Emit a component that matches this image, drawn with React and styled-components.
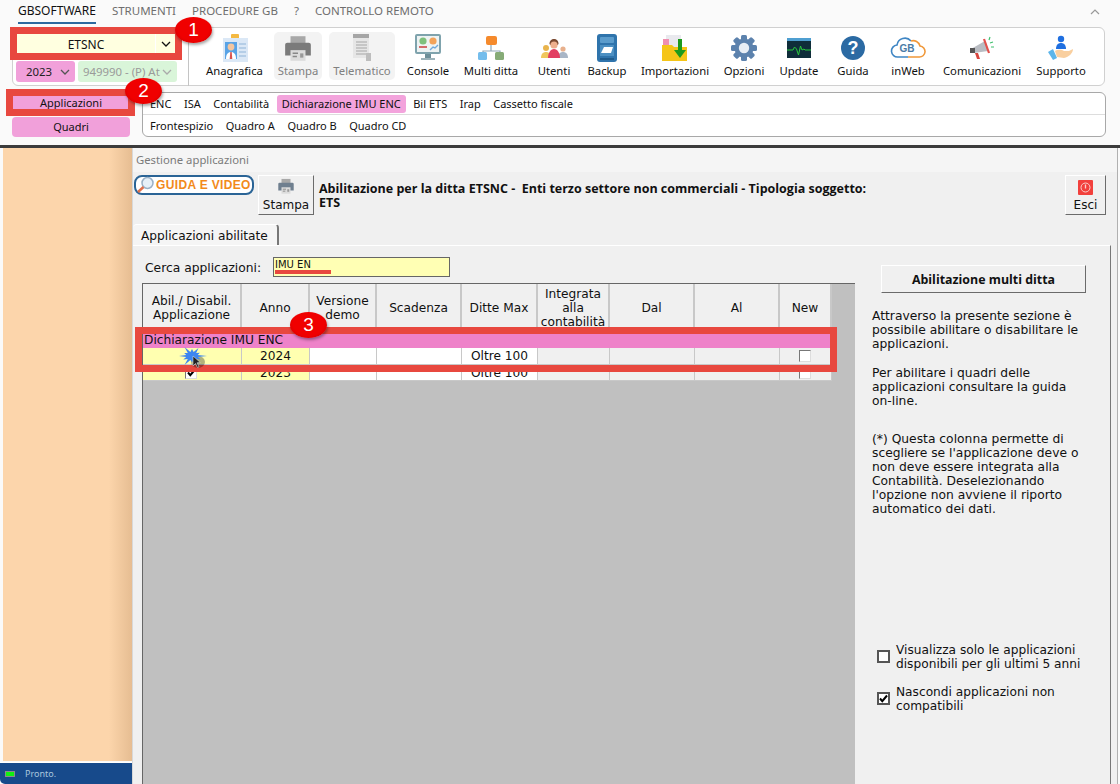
import React from "react"
import styled, { createGlobalStyle } from "styled-components"

const GlobalStyle = createGlobalStyle`
    html, body { margin: 0; padding: 0; background: #fafafa; }
    * { box-sizing: border-box; }
`

const ui = `"Noto Sans", "Open Sans", sans-serif`
const classic = `"DejaVu Sans", Verdana, sans-serif`

const Page = styled.div`
    position: relative;
    width: 1120px;
    height: 784px;
    overflow: hidden;
    background: #fafafa;
    display: flex;
    flex-direction: column;
    font-family: ${ui};
    color: #111;
`

const Header = styled.header`
    height: 145px;
    flex: none;
    display: flex;
    flex-direction: column;
`

const MenuBar = styled.nav`
    height: 24px;
    display: flex;
    align-items: center;
    gap: 16px;
    padding: 0 20px 0 18px;
    font-size: 11.5px;
`

const MenuItem = styled.span`
    height: 24px;
    line-height: 22px;
    font-size: ${p => (p.$active ? "12px" : "inherit")};
    color: ${p => (p.$active ? "#111" : "#6e6e6e")};
    border-bottom: 2px solid ${p => (p.$active ? "#2d6a9f" : "transparent")};
`

const Collapse = styled.svg`
    margin-left: auto;
    width: 10px;
    height: 6px;
`

const RibbonBox = styled.section`
    margin: 3px 15px 0 12px;
    height: 59px;
    display: flex;
    background: #fff;
    border: 1px solid #d0d0d0;
    border-radius: 6px;
`

const CompanyBlock = styled.div`
    width: 176px;
    height: 53px;
    margin-top: 5px;
    padding: 1px 0 0 3px;
    border-right: 1px solid #c4c4c4;
    display: flex;
    flex-direction: column;
    gap: 7px;
`

const CompanySelect = styled.div`
    width: 158px;
    margin-left: 1px;
    height: 20px;
    flex: none;
    display: flex;
    align-items: center;
    background: #ffffe0;
    font-size: 12px;
    span { flex: 1; text-align: center; }
`

const Caret = styled.div`
    width: 20px;
    height: 20px;
    border-left: 1px solid #fff;
    display: flex;
    align-items: center;
    justify-content: center;
`

const SelectRow = styled.div`
    display: flex;
    gap: 3px;
`

const SmallSelect = styled.div`
    width: ${p => p.$w}px;
    height: 21px;
    display: flex;
    align-items: center;
    justify-content: space-between;
    padding: 0 5px 0 ${p => p.$pad}px;
    border-radius: 3px;
    background: ${p => p.$bg};
    color: ${p => p.$fg};
    font-size: 11.4px;
    white-space: nowrap;
    overflow: hidden;
`

const RibbonItems = styled.div`
    display: flex;
    gap: 4px;
    padding: 4px 0 0 10px;
`

const RibbonItem = styled.div`
    width: ${p => p.$w}px;
    margin-left: ${p => p.$ml || 0}px;
    height: 48px;
    display: flex;
    flex-direction: column;
    align-items: center;
    padding-top: 1px;
    border-radius: 5px;
    background: ${p => (p.$disabled ? "#f3f3f3" : "transparent")};
    color: ${p => (p.$disabled ? "#808080" : "#111")};
    font-size: 11.3px;
    line-height: 15px;
    white-space: nowrap;
`

const RibbonIcon = styled.div`
    height: 30px;
    flex: none;
    display: flex;
    align-items: center;
    justify-content: center;
`

const SecondRow = styled.div`
    display: flex;
    margin: 6px 14px 0 12px;
    gap: 12px;
`

const SideButtons = styled.div`
    width: 118px;
    padding-top: 1px;
    display: flex;
    flex-direction: column;
    gap: 4px;
`

const PinkButton = styled.div`
    height: 20px;
    border-radius: 4px;
    background: #f1a0da;
    font-size: 11px;
    text-align: center;
    line-height: 20px;
`

const TabsPanel = styled.div`
    flex: 1;
    height: 45px;
    background: #fff;
    border: 1px solid #a8a8a8;
    border-radius: 6px;
    display: flex;
    flex-direction: column;
`

const TabsLine = styled.div`
    flex: 1;
    display: flex;
    align-items: center;
    gap: 2.5px;
    padding-left: 2px;
    font-size: 11px;
    & + & { border-top: 1px solid #ddd; }
`

const TabLabel = styled.span`
    height: 18px;
    line-height: 18px;
    padding: 0 5px;
    border-radius: 3px;
    background: ${p => (p.$active ? "#f3a3dc" : "transparent")};
`

const Main = styled.main`
    flex: 1;
    min-height: 0;
    display: flex;
    border-top: 3px solid #3c3c3c;
`

const Side = styled.aside`
    width: 132px;
    flex: none;
    display: flex;
    flex-direction: column;
`

const SideFill = styled.div`
    flex: 1;
    margin-left: 3px;
    background: linear-gradient(90deg, #fcd5ab 0%, #fcd5ab 82%, #e6bd92 100%);
`

const StatusBar = styled.div`
    height: 22px;
    margin-top: 1px;
    border-top: 1px solid #fff;
    border-bottom-left-radius: 5px;
    background: #174a8b;
    display: flex;
    align-items: center;
    gap: 10px;
    padding-left: 5px;
    font-size: 9px;
    color: #a9c6dd;
`

const Led = styled.div`
    width: 10px;
    height: 6px;
    background: #10f010;
    border: 1px solid #8a8a8a;
`

const Win = styled.div`
    flex: 1;
    min-width: 0;
    display: flex;
    flex-direction: column;
    margin-right: 2px;
    background: #f0f0f0;
    border-left: 1px solid #d8d8d8;
    border-right: 1px solid #b0b0b0;
    font-family: ${classic};
    font-size: 11.5px;
`

const TitleStrip = styled.div`
    height: 24px;
    padding: 4px 0 0 3px;
    background: #f5f5f5;
    color: #7b7b7b;
    font-family: ${ui};
    font-size: 11.3px;
`

const Toolbar = styled.div`
    height: 52px;
    flex: none;
    display: flex;
    align-items: flex-start;
    padding: 3px 11px 0 1px;
`

const GuideButton = styled.div`
    width: 120px;
    height: 20px;
    display: flex;
    align-items: center;
    padding-left: 0;
    background: #fff;
    border: 2px solid #2a6496;
    border-radius: 8px;
    color: #f28a1a;
    font-family: "Liberation Sans", sans-serif;
    font-weight: 700;
    font-size: 12px;
    letter-spacing: 0.35px;
    white-space: nowrap;
`

const RaisedButton = styled.div`
    width: ${p => p.$w}px;
    height: 40px;
    flex: none;
    display: flex;
    flex-direction: column;
    align-items: center;
    justify-content: flex-end;
    padding-bottom: 1px;
    margin-left: ${p => p.$ml || 0}px;
    border: 1px solid;
    border-color: #fff #6b6b6b #6b6b6b #fff;
    font-size: 12px;
    line-height: 15px;
    svg { margin-bottom: 3px; }
`

const Heading = styled.div`
    flex: 1;
    margin: 7px 0 0 5px;
    font-family: "Open Sans", sans-serif;
    font-weight: 700;
    font-size: 12.5px;
    line-height: 14px;
    white-space: pre-wrap;
`

const TabStrip = styled.div`
    height: 21px;
    flex: none;
    display: flex;
`

const Tab = styled.div`
    width: 146px;
    background: #f5f5f5;
    border-top: 1px solid #fff;
    border-right: 2px solid #777;
    border-radius: 4px 4px 0 0;
    padding-left: 8px;
    font-size: 12.2px;
    line-height: 22px;
`

const TabBody = styled.div`
    flex: 1;
    min-height: 0;
    display: flex;
    margin-right: 6px;
    border-top: 1px solid #fff;
    border-right: 1px solid #777;
`

const LeftCol = styled.div`
    width: 722px;
    flex: none;
    display: flex;
    flex-direction: column;
    padding-top: 11px;
`

const SearchRow = styled.div`
    display: flex;
    align-items: center;
    height: 20px;
    padding-left: 12px;
    font-size: 12.3px;
`

const SearchLabel = styled.label`
    width: 128px;
    padding-top: 1px;
`

const SearchInput = styled.div`
    position: relative;
    width: 177px;
    height: 20px;
    padding-left: 1px;
    background: #ffffb4;
    border: 1px solid #666;
    font-size: 10px;
    line-height: 14px;
    &::after {
        content: "";
        position: absolute;
        left: 1px;
        top: 12px;
        width: 56px;
        height: 4px;
        background: #e8483f;
    }
`

const GridArea = styled.div`
    flex: 1;
    margin: 6px 0 0 9px;
    background: #c0c0c0;
    border-top: 1px solid #666;
    border-left: 1px solid #666;
`

const Table = styled.div`
    width: 689px;
    display: grid;
    grid-template-columns: 99px 68px 67px 85px 76px 72px 85px 85px 52px;
    grid-template-rows: 48px 16px 17px 16px;
    font-size: 12.2px;
`

const HeadCell = styled.div`
    display: flex;
    align-items: center;
    justify-content: center;
    text-align: center;
    line-height: 14px;
    padding-top: 1px;
    background: #f0f0f0;
    border-right: 2px solid #c8c8c8;
    border-bottom: 1px solid #c8c8c8;
`

const GroupRow = styled.div`
    grid-column: 1 / -1;
    padding-left: 1px;
    background: #ee82c9;
    line-height: 16px;
`

const Cell = styled.div`
    display: flex;
    align-items: center;
    justify-content: center;
    overflow: hidden;
    background: ${p => p.$bg};
    border-right: 1px solid #c8c8c8;
    border-bottom: 1px solid #c8c8c8;
`

const TinyBox = styled.div`
    width: 12px;
    height: 12px;
    margin-right: 2px;
    display: flex;
    align-items: center;
    justify-content: center;
    background: #fff;
    border: 1px solid;
    border-color: #777 #ddd #ddd #777;
`

const RightCol = styled.div`
    flex: 1;
    padding: 19px 0 0 26px;
`

const WideButton = styled.div`
    width: 205px;
    height: 28px;
    display: flex;
    align-items: center;
    justify-content: center;
    border: 1px solid;
    border-color: #fff #6b6b6b #6b6b6b #fff;
    font-weight: 700;
    font-size: 12.4px;
    font-family: "Open Sans", sans-serif;
`

const Note = styled.p`
    margin: ${p => p.$top}px 0 0 -9px;
    width: 232px;
    font-size: 12.3px;
    line-height: 14px;
    white-space: pre-line;
`

const CheckRow = styled.div`
    display: flex;
    align-items: flex-start;
    gap: 6px;
    margin: ${p => p.$top}px 0 0 -4px;
    font-size: 12.2px;
    line-height: 14px;
    white-space: pre-line;
`

const CheckBox = styled.div`
    width: 13px;
    height: 13px;
    margin-top: 7px;
    flex: none;
    display: flex;
    align-items: center;
    justify-content: center;
    background: #fff;
    border: 2px solid #555;
`

const RedFrame = styled.div`
    position: absolute;
    left: ${p => p.$x}px;
    top: ${p => p.$y}px;
    width: ${p => p.$w}px;
    height: ${p => p.$h}px;
    border: ${p => p.$b}px solid #e8483f;
`

const Marker = styled.div`
    position: absolute;
    left: ${p => p.$x}px;
    top: ${p => p.$y}px;
    width: 37px;
    height: 26px;
    border-radius: 50%;
    background: radial-gradient(ellipse at 50% 40%, #f00000 60%, #c40000 100%);
    box-shadow: 1px 2px 3px rgba(0, 0, 0, 0.35);
    color: #fff;
    font-family: "Liberation Sans", sans-serif;
    font-size: 19px;
    line-height: 25px;
    text-align: center;
`

const ClickMark = styled.svg`
    position: absolute;
    left: 175px;
    top: 345px;
`

const Check = () => (
    <svg width="9" height="9" viewBox="0 0 9 9">
        <path d="M1 4.5l2.3 2.6L8 1.5" fill="none" stroke="#000" strokeWidth="2" />
    </svg>
)

const Chevron = ({ color = "#333" }) => (
    <svg width="10" height="6" viewBox="0 0 10 6">
        <path d="M1 1l4 4 4-4" fill="none" stroke={color} strokeWidth="1.3" />
    </svg>
)

const IdIcon = () => (
    <svg width="30" height="30" viewBox="0 0 30 30">
        <rect x="11" y="1" width="8" height="5" rx="1" fill="#f4b942" />
        <rect x="3" y="5" width="25" height="24" fill="#dbe8f6" />
        <rect x="5" y="9" width="12" height="17" fill="#58a3e6" />
        <circle cx="11" cy="14" r="3.4" fill="#f3c6a0" />
        <path d="M6 26c0-5 2-7 5-7s5 2 5 7z" fill="#fff" />
        <path d="M10.3 19h1.4l.6 7h-2.6z" fill="#d9534f" />
        <path d="M19 11h7M19 15h7M19 19h7M19 23h7" stroke="#a9c5e2" strokeWidth="1.5" />
    </svg>
)

const PrinterIcon = ({ w = 28, color = "#7b7b7b" }) => (
    <svg width={w} height={w} viewBox="0 0 28 28">
        <path d="M7 3h14v7H7z" fill="#a8a8a8" />
        <path d="M2 11a2 2 0 0 1 2-2h20a2 2 0 0 1 2 2v10H2z" fill={color} />
        <rect x="7" y="16" width="14" height="10" fill="#dcdcdc" />
        <path d="M9 19h5M9 22h4" stroke="#888" strokeWidth="1.4" />
        <rect x="16" y="19" width="3" height="4" fill="#999" />
    </svg>
)

const DocIcon = () => (
    <svg width="24" height="30" viewBox="0 0 24 30">
        <path d="M3 1h15v4h1v20H3z" fill="#e6e6e6" />
        <rect x="3" y="1" width="16" height="4" fill="#a6a6a6" />
        <path d="M6 9h11M6 12h11M6 15h11M6 18h11M6 21h11" stroke="#a6a6a6" strokeWidth="1" />
        <rect x="16" y="20" width="5" height="8" fill="#bdbdbd" />
    </svg>
)

const ConsoleIcon = () => (
    <svg width="28" height="30" viewBox="0 0 28 30">
        <rect x="1" y="1" width="26" height="20" rx="2" fill="#7fa3ad" />
        <rect x="3" y="3" width="22" height="16" fill="#eef3f3" />
        <circle cx="9" cy="8" r="3.6" fill="#7ec07c" />
        <circle cx="19" cy="8" r="3.6" fill="#f3a35a" />
        <rect x="5" y="13" width="8" height="2" fill="#d46a6a" />
        <path d="M16 17l3-3 2 1 3-3" stroke="#6fa8dc" strokeWidth="1.4" fill="none" />
        <rect x="11" y="21" width="6" height="4" fill="#6e8f99" />
        <rect x="7" y="25" width="14" height="2" fill="#9db3ba" />
    </svg>
)

const TreeIcon = () => (
    <svg width="28" height="28" viewBox="0 0 28 28">
        <path d="M14 11v6M6 22v-5h17v5" fill="none" stroke="#8fa7b8" strokeWidth="1.2" />
        <rect x="9" y="2" width="11" height="9" rx="2" fill="#f58a2c" />
        <rect x="1" y="18" width="9" height="8" rx="1.5" fill="#74bdec" />
        <rect x="18" y="18" width="9" height="8" rx="1.5" fill="#86ab77" />
    </svg>
)

const UsersIcon = () => (
    <svg width="28" height="28" viewBox="0 0 28 28">
        <circle cx="6" cy="14" r="3" fill="#e9b44c" />
        <path d="M1 24c0-4 2-6 5-6s5 2 5 6z" fill="#f0c75e" />
        <circle cx="23" cy="15" r="2.6" fill="#e8b08c" />
        <path d="M18 24c0-4 2-6 5-6s5 2 5 6z" fill="#a9b6c6" />
        <path d="M9.5 10c0-3.5 2-5 4.5-5s4.5 1.5 4.5 5l-1 1h-7z" fill="#7a4a32" />
        <circle cx="14" cy="11" r="3.6" fill="#eeb08e" />
        <path d="M8 24c0-5 2.5-9 6-9s6 4 6 9z" fill="#e23f62" />
    </svg>
)

const BinderIcon = () => (
    <svg width="24" height="30" viewBox="0 0 24 30">
        <rect x="2" y="1" width="20" height="28" rx="3" fill="#2f74ac" />
        <rect x="5" y="4" width="14" height="6" rx="1" fill="#5b9ccc" />
        <rect x="5" y="12" width="14" height="11" fill="#4b8fc2" />
        <path d="M6 20l3-6h9l-2 6z" fill="#fff" />
        <rect x="5" y="25" width="14" height="2" fill="#1f5b8c" />
    </svg>
)

const ImportIcon = () => (
    <svg width="28" height="30" viewBox="0 0 28 30">
        <rect x="5" y="2" width="15" height="13" fill="#e9e9ee" />
        <rect x="2" y="6" width="6" height="10" fill="#ef8fb0" />
        <path d="M1 12h10l2 2h13v14H1z" fill="#f5c518" />
        <path d="M17 6h4v11h4l-6 8-6-8h4z" fill="#1d9a1d" />
    </svg>
)

const GearIcon = () => (
    <svg width="28" height="28" viewBox="0 0 28 28">
        <g fill="#5c82ad">
            {[0, 45, 90, 135, 180, 225, 270, 315].map(a => (
                <rect key={a} x="11" y="1" width="6" height="7" rx="1.5" transform={`rotate(${a} 14 14)`} />
            ))}
        </g>
        <circle cx="14" cy="14" r="9.5" fill="#5c82ad" />
        <circle cx="14" cy="14" r="5.2" fill="#e8eef5" />
    </svg>
)

const MonitorIcon = () => (
    <svg width="26" height="26" viewBox="0 0 26 26">
        <rect x="1" y="3" width="24" height="20" fill="#0f2d3a" />
        <rect x="1" y="3" width="24" height="3" fill="#4f9fd1" />
        <path d="M1 15h6l1.5-3 2 2 2 6 2-9 1.5 4 2-1 1 1h6" fill="none" stroke="#28c83c" strokeWidth="1" />
    </svg>
)

const HelpIcon = () => (
    <svg width="26" height="26" viewBox="0 0 26 26">
        <circle cx="13" cy="13" r="12" fill="#2b6aa3" />
        <text x="13" y="19" textAnchor="middle" fontFamily="Liberation Sans" fontWeight="700" fontSize="18" fill="#fff">?</text>
    </svg>
)

const CloudIcon = () => (
    <svg width="36" height="24" viewBox="0 0 36 24">
        <path d="M18 21H8a6 6 0 0 1-1-12 8 8 0 0 1 14-4" fill="none" stroke="#3f86c4" strokeWidth="1.6" />
        <path d="M18 21h11a5.5 5.5 0 0 0 1-11 7 7 0 0 0-9-5" fill="none" stroke="#f0983a" strokeWidth="1.6" />
        <text x="17" y="16" textAnchor="middle" fontFamily="Liberation Sans" fontWeight="700" fontSize="10" fill="#4a7ba6">GB</text>
    </svg>
)

const MegaphoneIcon = () => (
    <svg width="28" height="28" viewBox="0 0 28 28">
        <path d="M3 15l14-8 3 10-14 2z" fill="#b9bcc2" />
        <path d="M16 5l5 14" stroke="#e2504c" strokeWidth="2.2" />
        <rect x="2" y="14" width="5" height="5" fill="#555" />
        <path d="M7 19l2 6h3l-2-6z" fill="#d8463f" />
        <path d="M22 3l-1 3M25 8l-3 1M26 13h-3" stroke="#3fc06c" strokeWidth="1.2" />
    </svg>
)

const SupportIcon = () => (
    <svg width="28" height="28" viewBox="0 0 28 28">
        <circle cx="14" cy="5" r="3.2" fill="#1f6fe0" />
        <path d="M9 15c0-4 2-6 5-6s5 2 5 6z" fill="#1f6fe0" />
        <path d="M8 17c4-2 7-1 9 0h5l4-2c0 4-4 8-9 9l-7-1z" fill="#f9cf9f" />
        <path d="M1 18l5-3 4 9-4 2z" fill="#5cb5ea" />
    </svg>
)

const LensIcon = () => (
    <svg width="20" height="18" viewBox="0 0 20 18">
        <circle cx="11.5" cy="7" r="5.5" fill="#e6f0f8" stroke="#9ab1c6" strokeWidth="1.5" />
        <path d="M7.5 11L2 16" stroke="#e0704a" strokeWidth="2.5" />
    </svg>
)

const ExitIcon = () => (
    <svg width="15" height="15" viewBox="0 0 15 15">
        <rect width="15" height="15" rx="1" fill="#f2403c" />
        <circle cx="7.5" cy="7.5" r="4.5" fill="none" stroke="#fbd0cc" strokeWidth="1" />
        <path d="M7.5 4.5v4" stroke="#fbd0cc" strokeWidth="1.3" />
    </svg>
)

// spiky splash drawn around the mouse pointer
const splash = Array.from({ length: 24 }, (_, i) => {
    const a = (i * Math.PI) / 12
    const r = i % 2 ? 6 : [15, 10, 13, 9][(i / 2) % 4]
    return `${(17 + r * Math.cos(a)).toFixed(1)},${(11 + r * 0.7 * Math.sin(a)).toFixed(1)}`
}).join(" ")

const ribbon = [
    { label: "Anagrafica", w: 71, icon: <IdIcon /> },
    { label: "Stampa", w: 48, disabled: true, icon: <PrinterIcon w={30} /> },
    { label: "Telematico", w: 66, ml: 3, disabled: true, icon: <DocIcon /> },
    { label: "Console", w: 58, icon: <ConsoleIcon /> },
    { label: "Multi ditta", w: 60, icon: <TreeIcon /> },
    { label: "Utenti", w: 58, icon: <UsersIcon /> },
    { label: "Backup", w: 40, icon: <BinderIcon /> },
    { label: "Importazioni", w: 88, icon: <ImportIcon /> },
    { label: "Opzioni", w: 42, icon: <GearIcon /> },
    { label: "Update", w: 60, icon: <MonitorIcon /> },
    { label: "Guida", w: 40, icon: <HelpIcon /> },
    { label: "inWeb", w: 62, icon: <CloudIcon /> },
    { label: "Comunicazioni", w: 78, icon: <MegaphoneIcon /> },
    { label: "Supporto", w: 72, icon: <SupportIcon /> },
]

const rows = [
    { year: "2024", checked: false },
    { year: "2023", checked: true },
]

const App = () => {
    return (
        <Page>
            <GlobalStyle />
            <Header>
                <MenuBar>
                    <MenuItem $active>GBSOFTWARE</MenuItem>
                    <MenuItem>STRUMENTI</MenuItem>
                    <MenuItem>PROCEDURE GB</MenuItem>
                    <MenuItem>?</MenuItem>
                    <MenuItem>CONTROLLO REMOTO</MenuItem>
                    <Collapse viewBox="0 0 10 6">
                        <path d="M1 5l4-4 4 4" fill="none" stroke="#999" strokeWidth="1.2" />
                    </Collapse>
                </MenuBar>
                <RibbonBox>
                    <CompanyBlock>
                        <CompanySelect>
                            <span>ETSNC</span>
                            <Caret><Chevron color="#111" /></Caret>
                        </CompanySelect>
                        <SelectRow>
                            <SmallSelect $w={59} $pad={10} $bg="#f1a0da" $fg="#222">
                                2023 <Chevron color="#555" />
                            </SmallSelect>
                            <SmallSelect $w={99} $pad={5} $bg="#d9f5d9" $fg="#9a9a9a">
                                949990 - (P) At <Chevron color="#aaa" />
                            </SmallSelect>
                        </SelectRow>
                    </CompanyBlock>
                    <RibbonItems>
                        {ribbon.map(item => (
                            <RibbonItem key={item.label} $w={item.w} $ml={item.ml} $disabled={item.disabled}>
                                <RibbonIcon>{item.icon}</RibbonIcon>
                                <span>{item.label}</span>
                            </RibbonItem>
                        ))}
                    </RibbonItems>
                </RibbonBox>
                <SecondRow>
                    <SideButtons>
                        <PinkButton>Applicazioni</PinkButton>
                        <PinkButton>Quadri</PinkButton>
                    </SideButtons>
                    <TabsPanel>
                        <TabsLine>
                            <TabLabel>ENC</TabLabel>
                            <TabLabel>ISA</TabLabel>
                            <TabLabel>Contabilità</TabLabel>
                            <TabLabel $active>Dichiarazione IMU ENC</TabLabel>
                            <TabLabel>Bil ETS</TabLabel>
                            <TabLabel>Irap</TabLabel>
                            <TabLabel>Cassetto fiscale</TabLabel>
                        </TabsLine>
                        <TabsLine>
                            <TabLabel>Frontespizio</TabLabel>
                            <TabLabel>Quadro A</TabLabel>
                            <TabLabel>Quadro B</TabLabel>
                            <TabLabel>Quadro CD</TabLabel>
                        </TabsLine>
                    </TabsPanel>
                </SecondRow>
            </Header>
            <Main>
                <Side>
                    <SideFill />
                    <StatusBar>
                        <Led />
                        Pronto.
                    </StatusBar>
                </Side>
                <Win>
                    <TitleStrip>Gestione applicazioni</TitleStrip>
                    <Toolbar>
                        <GuideButton><LensIcon />GUIDA E VIDEO</GuideButton>
                        <RaisedButton $w={56} $ml={4}>
                            <PrinterIcon w={18} color="#6f7f8f" />
                            Stampa
                        </RaisedButton>
                        <Heading>{"Abilitazione per la ditta ETSNC -  Enti terzo settore non commerciali - Tipologia soggetto:\nETS"}</Heading>
                        <RaisedButton $w={41}>
                            <ExitIcon />
                            Esci
                        </RaisedButton>
                    </Toolbar>
                    <TabStrip>
                        <Tab>Applicazioni abilitate</Tab>
                    </TabStrip>
                    <TabBody>
                        <LeftCol>
                            <SearchRow>
                                <SearchLabel>Cerca applicazioni:</SearchLabel>
                                <SearchInput>IMU EN</SearchInput>
                            </SearchRow>
                            <GridArea>
                                <Table>
                                    <HeadCell>Abil./ Disabil. Applicazione</HeadCell>
                                    <HeadCell>Anno</HeadCell>
                                    <HeadCell>Versione demo</HeadCell>
                                    <HeadCell>Scadenza</HeadCell>
                                    <HeadCell>Ditte Max</HeadCell>
                                    <HeadCell>Integrata alla contabilità</HeadCell>
                                    <HeadCell>Dal</HeadCell>
                                    <HeadCell>Al</HeadCell>
                                    <HeadCell>New</HeadCell>
                                    <GroupRow>Dichiarazione IMU ENC</GroupRow>
                                    {rows.map(row => (
                                        <React.Fragment key={row.year}>
                                            <Cell $bg="#ffffb0">
                                                {row.checked && <TinyBox><Check /></TinyBox>}
                                            </Cell>
                                            <Cell $bg="#ffffb0">{row.year}</Cell>
                                            <Cell $bg="#fff" />
                                            <Cell $bg="#fff" />
                                            <Cell $bg="#fff">Oltre 100</Cell>
                                            <Cell $bg="#f0f0f0" />
                                            <Cell $bg="#f0f0f0" />
                                            <Cell $bg="#f0f0f0" />
                                            <Cell $bg="#f0f0f0"><TinyBox /></Cell>
                                        </React.Fragment>
                                    ))}
                                </Table>
                            </GridArea>
                        </LeftCol>
                        <RightCol>
                            <WideButton>Abilitazione multi ditta</WideButton>
                            <Note $top={16}>{"Attraverso la presente sezione è\npossibile abilitare o disabilitare le\napplicazioni."}</Note>
                            <Note $top={15}>{"Per abilitare i quadri delle\napplicazioni consultare la guida\non-line."}</Note>
                            <Note $top={24}>{"(*) Questa colonna permette di\nscegliere se l'applicazione deve o\nnon deve essere integrata alla\nContabilità. Deselezionando\nl'opzione non avviene il riporto\nautomatico dei dati."}</Note>
                            <CheckRow $top={127}>
                                <CheckBox />
                                {"Visualizza solo le applicazioni\ndisponibili per gli ultimi 5 anni"}
                            </CheckRow>
                            <CheckRow $top={14}>
                                <CheckBox><Check /></CheckBox>
                                {"Nascondi applicazioni non\ncompatibili"}
                            </CheckRow>
                        </RightCol>
                    </TabBody>
                </Win>
            </Main>
            <RedFrame $x={10} $y={27} $w={172} $h={33} $b={7} />
            <RedFrame $x={6} $y={89} $w={129} $h={27} $b={7} />
            <RedFrame $x={135} $y={327} $w={702} $h={45} $b={7} />
            <Marker $x={175} $y={17}>1</Marker>
            <Marker $x={125} $y={78}>2</Marker>
            <Marker $x={290} $y={312}>3</Marker>
            <ClickMark width="34" height="26" viewBox="0 0 34 26">
                <ellipse cx="23" cy="17" rx="7" ry="6" fill="#000" opacity="0.3" />
                <polygon points={splash} fill="#3d86f0" />
                <path d="M18 11l0 10 2.5-2.5 2 4 1.5-.7-2-4 3.3-.3z" fill="#222" stroke="#eee" strokeWidth="0.5" />
            </ClickMark>
        </Page>
    )
}

export default App
